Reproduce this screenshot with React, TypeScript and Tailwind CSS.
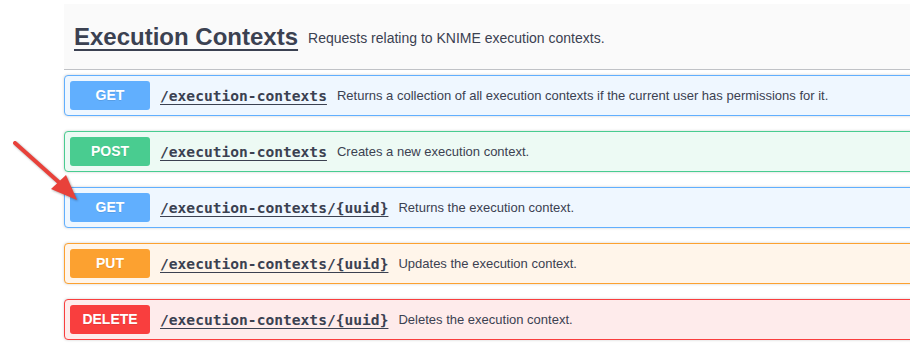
const ops = [
  { method: 'GET', path: '/execution-contexts', summary: 'Returns a collection of all execution contexts if the current user has permissions for it.', block: 'bg-[#eff7ff] border-[#61affe]', badge: 'bg-[#61affe]' },
  { method: 'POST', path: '/execution-contexts', summary: 'Creates a new execution context.', block: 'bg-[#edfaf4] border-[#49cc90]', badge: 'bg-[#49cc90]' },
  { method: 'GET', path: '/execution-contexts/{uuid}', summary: 'Returns the execution context.', block: 'bg-[#eff7ff] border-[#61affe]', badge: 'bg-[#61affe]' },
  { method: 'PUT', path: '/execution-contexts/{uuid}', summary: 'Updates the execution context.', block: 'bg-[#fff5ea] border-[#fca130]', badge: 'bg-[#fca130]' },
  { method: 'DELETE', path: '/execution-contexts/{uuid}', summary: 'Deletes the execution context.', block: 'bg-[#feebeb] border-[#f93e3e]', badge: 'bg-[#f93e3e]' },
];

function OpBlock({ method, path, summary, block, badge }: (typeof ops)[number]) {
  return (
    <div className={`flex items-center h-[41px] p-[5px] border rounded-[4px] shadow-[0_0_3px_rgba(0,0,0,0.19)] ${block}`}>
      <span
        className={`w-[80px] h-[29px] flex items-center justify-center rounded-[3px] text-white text-[14px] font-bold [text-shadow:0_1px_0_rgba(0,0,0,0.1)] ${badge}`}
      >
        {method}
      </span>
      <span className="ml-[10px] font-['DejaVu_Sans_Mono',monospace] text-[14.6px] font-semibold text-[#3b4151] underline underline-offset-[3px]">
        {path}
      </span>
      <span className="ml-[10px] text-[13px] text-[#3b4151]">{summary}</span>
    </div>
  );
}

export default function App() {
  return (
    <div className="relative w-[910px] h-[350px] overflow-hidden bg-white pt-1 pl-16 font-['Liberation_Sans',Arial,sans-serif]">
      <div className="w-[880px]">
        <div className="flex items-center h-[66px] px-[10px] bg-[#fafafa] border-b border-[#3b4151]/30">
          <span className="text-[24px] font-bold text-[#3b4151] underline underline-offset-[4px] decoration-2">
            Execution Contexts
          </span>
          <span className="ml-[10px] mt-[4px] text-[14px] text-[#3b4151]">Requests relating to KNIME execution contexts.</span>
        </div>
        <div className="mt-[5px] flex flex-col gap-[15px]">
          {ops.map((op, i) => (
            <OpBlock key={i} {...op} />
          ))}
        </div>
      </div>
      <svg className="absolute left-0 top-0 drop-shadow-[1px_1px_1px_rgba(0,0,0,0.35)]" width="100" height="220" viewBox="0 0 100 220">
        <line x1="15" y1="143" x2="62" y2="185" stroke="#e8413a" strokeWidth="4" strokeLinecap="round" />
        <polygon points="77,200 51,189 66,175" fill="#e8413a" />
      </svg>
    </div>
  );
}
